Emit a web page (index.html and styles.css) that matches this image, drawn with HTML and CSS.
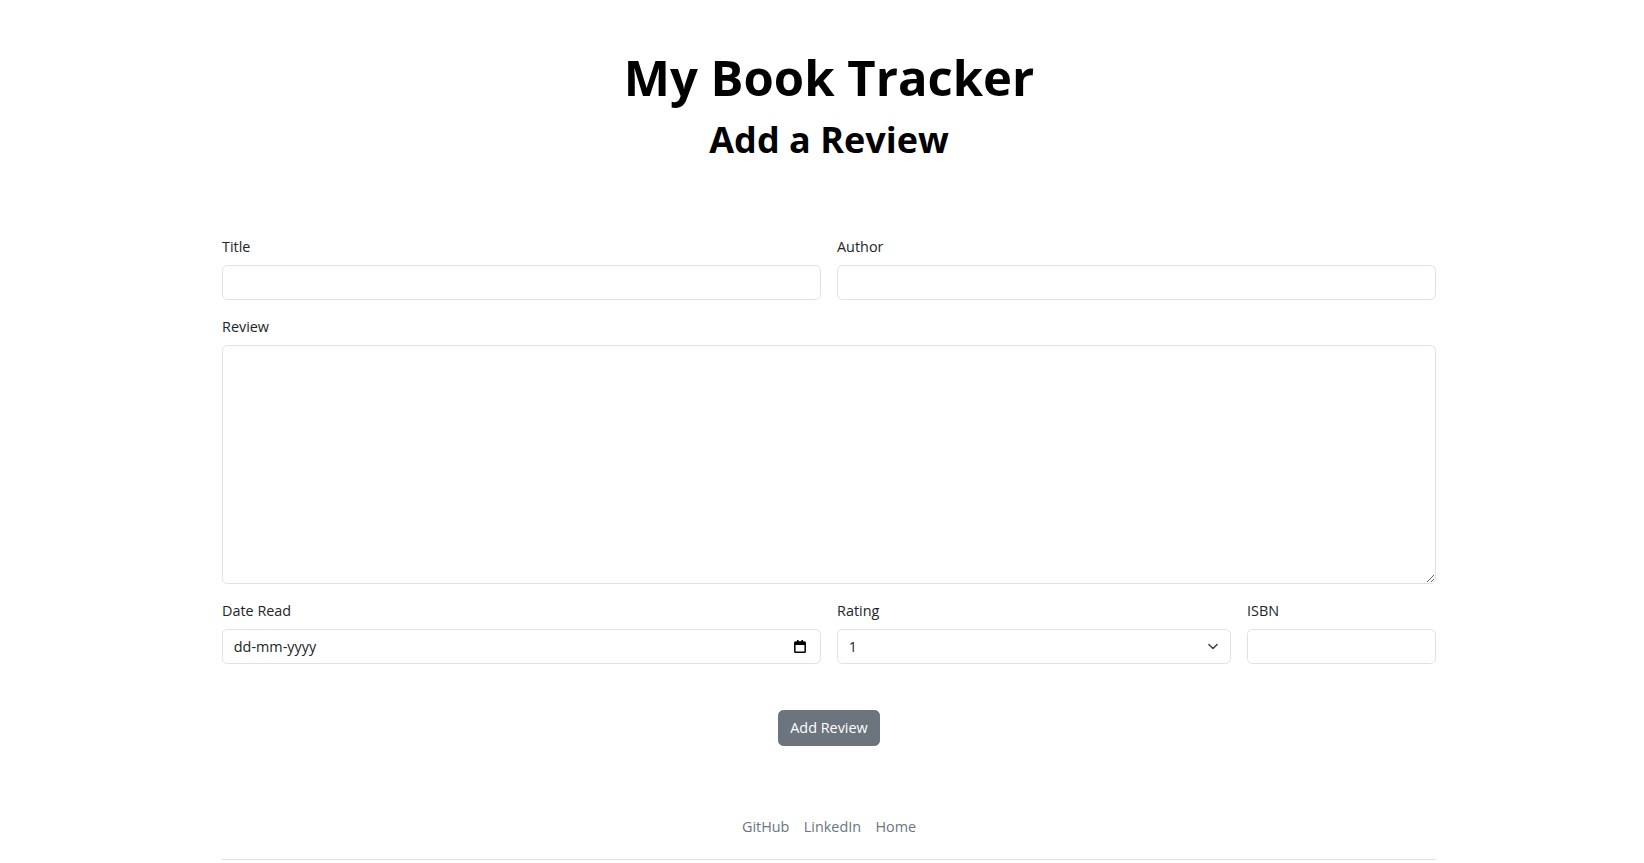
FILE: index.html
```html
<!DOCTYPE html>
<html lang="en">
<head>
<meta charset="utf-8">
<title>My Book Tracker</title>
<link rel="stylesheet" href="styles.css">
</head>
<body>
<div class="page">
  <header class="header">
    <h1 class="title">My Book Tracker</h1>
    <h2 class="subtitle">Add a Review</h2>
  </header>

  <form class="review-form">
    <div class="field span-6">
      <label class="label" for="title">Title</label>
      <input class="control" id="title" type="text">
    </div>
    <div class="field span-6">
      <label class="label" for="author">Author</label>
      <input class="control" id="author" type="text">
    </div>
    <div class="field span-12">
      <label class="label" for="review">Review</label>
      <textarea class="control textarea" id="review"></textarea>
    </div>
    <div class="field span-6">
      <label class="label" for="date">Date Read</label>
      <div class="control date-control" id="date">
        <span class="date-text">dd-mm-yyyy</span>
        <svg class="cal-icon" width="12" height="13" viewBox="0 0 12 13" aria-hidden="true">
          <rect x="3" y="0" width="1.6" height="2.5" fill="#000"/>
          <rect x="7.4" y="0" width="1.6" height="2.5" fill="#000"/>
          <rect x="0.8" y="2" width="10.4" height="10.2" rx="0.8" fill="none" stroke="#000" stroke-width="1.5"/>
          <rect x="0.8" y="2" width="10.4" height="3" fill="#000"/>
        </svg>
      </div>
    </div>
    <div class="field span-4">
      <label class="label" for="rating">Rating</label>
      <div class="select-wrap">
        <select class="control select" id="rating">
          <option>1</option>
          <option>2</option>
          <option>3</option>
          <option>4</option>
          <option>5</option>
        </select>
        <svg class="chevron" width="14" height="11" viewBox="0 0 16 16" aria-hidden="true">
          <path d="M2 5l6 6 6-6" fill="none" stroke="#343a40" stroke-width="2" stroke-linecap="round" stroke-linejoin="round"/>
        </svg>
      </div>
    </div>
    <div class="field span-2">
      <label class="label" for="isbn">ISBN</label>
      <input class="control" id="isbn" type="text">
    </div>
    <div class="actions span-12">
      <button class="btn" type="submit">Add Review</button>
    </div>
  </form>

  <footer class="footer">
    <nav class="footer-nav">
      <a class="footer-link" href="#">GitHub</a>
      <a class="footer-link" href="#">LinkedIn</a>
      <a class="footer-link" href="#">Home</a>
    </nav>
  </footer>
</div>
</body>
</html>
```

FILE: styles.css
```css
* { box-sizing: border-box; }

html, body {
  margin: 0;
  padding: 0;
  background: #fff;
}

body {
  font-family: "Open Sans", "Noto Sans", "Liberation Sans", sans-serif;
  font-size: 14.4px;
  line-height: 1.5;
  color: #212529;
}

.page {
  width: 1214px;
  margin-left: calc(50% - 600px);
}

.header {
  text-align: center;
  padding-top: 48px;
}

.title {
  margin: 0;
  font-size: 49px;
  font-weight: 700;
  line-height: 1.2;
  color: #000;
}

.subtitle {
  margin: 11px 0 0;
  font-size: 36px;
  font-weight: 700;
  line-height: 1.2;
  color: #000;
}

.review-form {
  margin-top: 75px;
  display: grid;
  grid-template-columns: repeat(12, 1fr);
  column-gap: 16px;
  row-gap: 16px;
}

.span-2 { grid-column: span 2; }
.span-4 { grid-column: span 4; }
.span-6 { grid-column: span 6; }
.span-12 { grid-column: span 12; }

.label {
  display: block;
  margin-bottom: 7.2px;
  line-height: 21.6px;
}

.control {
  display: block;
  width: 100%;
  height: 35.5px;
  margin: 0;
  padding: 5.4px 10.8px;
  font: inherit;
  color: #212529;
  background: #fff;
  border: 1px solid #dee2e6;
  border-radius: 5.4px;
  outline: none;
}

.textarea {
  height: 239px;
  resize: vertical;
}

.date-control {
  display: flex;
  align-items: center;
  justify-content: space-between;
  padding-right: 14px;
}

.cal-icon { display: block; }

.select-wrap { position: relative; }

.select {
  appearance: none;
  -webkit-appearance: none;
  padding-right: 36px;
}

.chevron {
  position: absolute;
  right: 10.8px;
  top: 12.5px;
  pointer-events: none;
}

.actions {
  display: flex;
  justify-content: center;
  padding-top: 30px;
}

.btn {
  font: inherit;
  color: #fff;
  background: #6c757d;
  border: 1px solid #6c757d;
  border-radius: 5.4px;
  padding: 6px 10.8px;
  line-height: 1.5;
  cursor: pointer;
}

.footer {
  margin-top: 63px;
}

.footer-nav {
  display: flex;
  justify-content: center;
  padding-bottom: 14.4px;
  border-bottom: 1px solid #dee2e6;
}

.footer-link {
  display: block;
  padding: 7.2px 7.2px;
  color: #6c757d;
  text-decoration: none;
}
```
